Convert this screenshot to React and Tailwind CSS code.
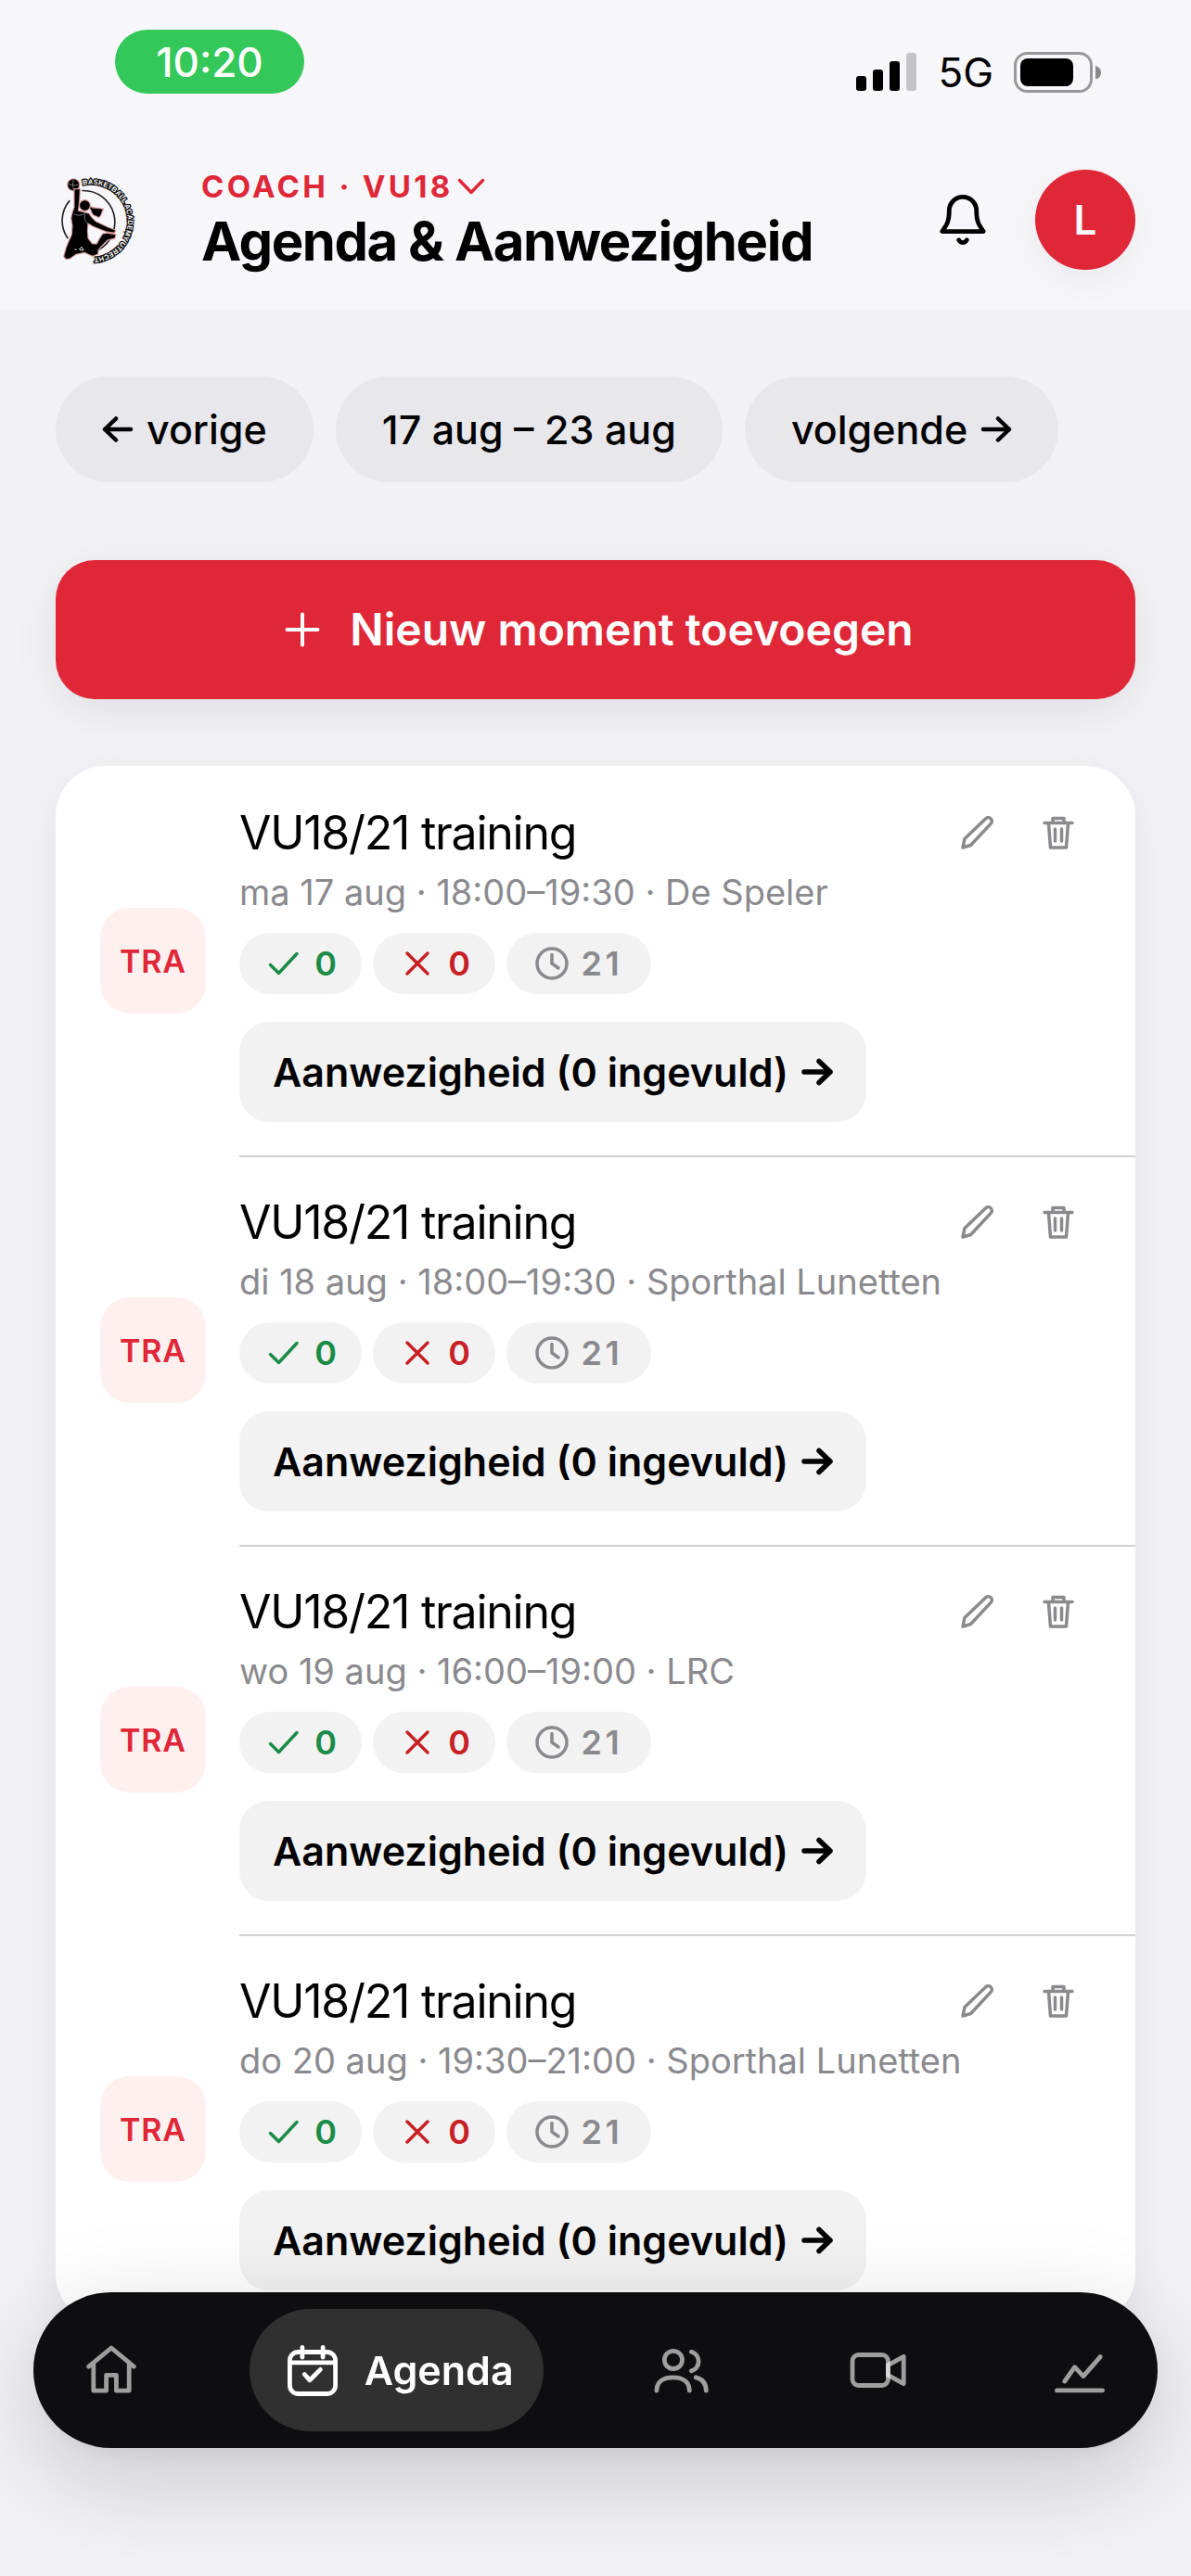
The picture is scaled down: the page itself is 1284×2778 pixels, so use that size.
import { useState } from "react";

const events = [
  { id: 1, title: "VU18/21 training", date: "ma 17 aug", time: "18:00–19:30", place: "De Speler" },
  { id: 2, title: "VU18/21 training", date: "di 18 aug", time: "18:00–19:30", place: "Sporthal Lunetten" },
  { id: 3, title: "VU18/21 training", date: "wo 19 aug", time: "16:00–19:00", place: "LRC" },
  { id: 4, title: "VU18/21 training", date: "do 20 aug", time: "19:30–21:00", place: "Sporthal Lunetten" },
];

function Icon({ children, className = "size-[72px]", width = 1.6, box = "0 0 24 24" }) {
  return (
    <svg
      viewBox={box}
      className={`${className} shrink-0`}
      fill="none"
      stroke="currentColor"
      strokeWidth={width}
      strokeLinecap="round"
      strokeLinejoin="round"
      aria-hidden="true"
    >
      {children}
    </svg>
  );
}

const tabs = [
  {
    name: "Home",
    icon: <path d="M3.9 10.7 12 4l8.1 6.7M5.6 9.6v9.8h4.6v-5.6h3.6v5.6h4.6V9.6" />,
  },
  {
    name: "Agenda",
    icon: (
      <>
        <rect x="3.8" y="5.5" width="16.4" height="15" rx="3" />
        <path d="M3.8 9.3h16.4M8.3 3.8v3.6M15.7 3.8v3.6M9.1 13.5l1.9 2.1 3.8-3.8" />
      </>
    ),
  },
  {
    name: "Team",
    icon: (
      <>
        <circle cx="9.3" cy="8.3" r="3.2" />
        <path d="M3.3 19.4c0-3 2.1-4.8 5.9-4.8s5.9 1.8 5.9 4.8M15.8 5.4a3.6 3.6 0 0 1 0 6.9M17.4 14.6c2.4.6 3.7 2.3 3.7 4.8" />
      </>
    ),
  },
  {
    name: "Video",
    icon: (
      <>
        <rect x="2" y="6.5" width="12.8" height="11" rx="2.2" />
        <path d="M14.8 10.2 20.4 7.1v9.8l-5.6-3.1z" />
      </>
    ),
  },
  {
    name: "Statistieken",
    icon: <path d="M3.8 19.3h16.4M6.6 16l3.6-5.1 3.1 3.3 6.1-7" />,
  },
];

function Logo() {
  return (
    <svg
      viewBox="51 56 249 290"
      className="h-24 w-[83px] shrink-0 overflow-visible"
      role="img"
      aria-label="Basketball Academy Utrecht"
    >
      <defs>
        <path id="logo-arc" d="M121 88A120 120 0 0 1 267 205A120 120 0 0 1 137 324.600" />
      </defs>
      <path d="M118 106a103 103 0 0 1 52 194M78 138a100 100 0 0 0-6 124" fill="none" stroke="#222" strokeWidth="5" />
      <text
        fill="#fff"
        stroke="#111"
        strokeWidth="8"
        paintOrder="stroke"
        className="font-['Liberation_Sans'] text-[23px] font-bold"
      >
        <textPath href="#logo-arc">BASKETBALL ACADEMY UTRECHT</textPath>
      </text>
      <g fill="#000" stroke="#d99a9c" strokeWidth="7" paintOrder="stroke" strokeLinejoin="round">
        <circle cx="90" cy="87" r="18" />
        <path d="M142 158c14 10 28 4 44 10-8 6-2 16-14 24-8-6-20-4-22-18z" />
        <path d="M94 102h16l-2 38-4 32 14 4 22 6 8 12 14 14 38 18 26 10-4 6-26-4-40-16-20-12-2 26 2 26 14 18 16 2 10-18 10-16 14-2 26 4-2 10-24 6-14 14-16 18-2 14-16 6-26-12-28 6-20 14-12 2-6-8 8-28 8-20 10-22 2-30-4-24 4-18 6-18z" />
        <circle cx="127" cy="154" r="16" />
      </g>
      <path d="M74 84c11 6 22 6 33 2M91 70c-5 12-4 24 1 35M92 182c12 6 24 6 36-2M128 184c-4 14 0 22 8 30" fill="none" stroke="#8d8d8d" strokeWidth="2.5" />
      <path d="M93 297l8 2M109 298l7-9 7 12z" fill="none" stroke="#ddd" strokeWidth="3" />
    </svg>
  );
}

function StatusBar() {
  return (
    <div className="flex h-[138px] items-start justify-between pt-8 pr-24 pl-[124px]">
      <div className="flex h-[69px] w-[204px] items-center justify-center rounded-full bg-[#34c759] text-[44px] font-medium text-white">
        10:20
      </div>
      <div className="flex items-center gap-[22px] pt-[22px]">
        <svg viewBox="0 0 66 42" className="h-[42px] w-[66px]" aria-hidden="true">
          <rect x="0" y="25" width="11" height="16" rx="3" />
          <rect x="18" y="18" width="11" height="23" rx="3" />
          <rect x="36" y="9" width="11" height="32" rx="3" />
          <rect x="54" y="0" width="11" height="41" rx="3" fill="#c5c5c8" />
        </svg>
        <span className="text-[44px] leading-[48px]">5G</span>
        <svg viewBox="0 0 95 44" className="h-11 w-[95px]" aria-hidden="true">
          <rect x="1.5" y="1.5" width="82" height="41" rx="13" fill="none" stroke="#98989c" strokeWidth="3" />
          <rect x="7" y="7" width="57" height="30" rx="8" />
          <path d="M88 15c4 1 6 4 6 7.500s-2 6-6 7z" fill="#8a8a8e" />
        </svg>
      </div>
    </div>
  );
}

function Arrow({ left = false, width = 4.5 }) {
  return (
    <Icon box="0 0 34 34" className="size-[34px]" width={width}>
      {left ? <path d="M31 17H3M15 5.500 3 17l12 11.500" /> : <path d="M3 17h28M19 5.500 31 17 19 28.500" />}
    </Icon>
  );
}

function EventRow({ event, first }) {
  return (
    <li className="flex gap-9 pl-12">
      <div className="flex size-[114px] shrink-0 items-center justify-center self-center rounded-[32px] bg-[#fff0f0] text-[34px] font-semibold tracking-wide text-[#df2738]">
        TRA
      </div>
      <div className={`flex-1 pb-9 ${first ? "pt-9" : "border-t-2 border-[#d1d1d3] pt-[34px]"}`}>
        <div className="flex items-center justify-between pr-10">
          <h2 className="text-[50px] leading-[72px] tracking-tight">{event.title}</h2>
          <div className="flex text-[#8a8a8e]">
            <button aria-label="Bewerken" className="flex h-[72px] w-[87px] items-center justify-center">
              <Icon box="0 0 36 36" className="size-9" width={3.5}>
                <path d="m2 34 2-9.500L26.500 3a3.700 3.700 0 0 1 5.800 5.200L10.500 31.500z" />
              </Icon>
            </button>
            <button aria-label="Verwijderen" className="flex h-[72px] w-[87px] items-center justify-center">
              <Icon box="0 0 36 36" className="size-9" width={3.5}>
                <path d="M3 7.500h30M12 7V2.500h12V7M7.500 8 9.500 34h17l2-26M14.500 14v13M21.500 14v13" />
              </Icon>
            </button>
          </div>
        </div>
        <p className="text-[38px] leading-[56px] text-[#8a8a8e]">
          {event.date} · {event.time} · {event.place}
        </p>
        <div className="mt-4 flex gap-3 text-[36px] leading-[66px] font-semibold">
          <span className="flex h-[66px] w-[132px] items-center justify-center gap-4 rounded-full bg-[#f2f2f2] pl-1 text-[#1b8c47]">
            <Icon box="0 0 34 34" className="size-[34px]" width={3.5}>
              <path d="M2.500 18.500 11.500 27.500 31 6.500" />
            </Icon>
            0
          </span>
          <span className="flex h-[66px] w-[132px] items-center justify-center gap-4 rounded-full bg-[#f2f2f2] pl-1 text-[#c82025]">
            <Icon box="0 0 34 34" className="size-[34px]" width={3.5}>
              <path d="M6 6l22 22M28 6 6 28" />
            </Icon>
            0
          </span>
          <span className="flex h-[66px] w-[156px] items-center justify-center gap-[14px] rounded-full bg-[#f2f2f2] tracking-widest text-[#8a8a8e]">
            <Icon box="0 0 36 36" className="size-9" width={3.5}>
              <circle cx="18" cy="18" r="16" />
              <path d="M18 8.500V18l7 5" />
            </Icon>
            21
          </span>
        </div>
        <button className="mt-[30px] flex h-[108px] items-center gap-[14px] rounded-[32px] bg-[#f2f2f2] px-9 text-[43px] font-semibold">
          Aanwezigheid (0 ingevuld)
          <Arrow width={5.5} />
        </button>
      </div>
    </li>
  );
}

export default function App() {
  const [activeTab, setActiveTab] = useState("Agenda");

  return (
    <div className="min-h-screen bg-[#f2f1f6] pb-60 font-[Inter,sans-serif] text-black">
      <header className="bg-[#f7f6fb]">
        <StatusBar />
        <div className="flex h-[196px] items-center pt-0.5 pr-[60px] pl-[66px]">
          <Logo />
          <div className="ml-[68px] flex-1 pt-1">
            <button className="flex items-center gap-1 text-[33px] leading-[42px] font-bold tracking-widest text-[#df2738]">
              COACH · VU18
              <Icon box="0 0 30 18" className="h-[18px] w-[30px]" width={3.5}>
                <path d="M2.500 2.500 15 15.500 27.500 2.500" />
              </Icon>
            </button>
            <h1 className="text-[58px] leading-[76px] font-bold tracking-tight">Agenda &amp; Aanwezigheid</h1>
          </div>
          <button aria-label="Meldingen" className="mr-[42px]">
            <Icon>
              <path d="M12 3.800a4.900 4.900 0 0 0-4.900 4.900c0 3.900-.8 5-2.500 7.500h14.800c-1.700-2.500-2.500-3.600-2.500-7.500A4.900 4.900 0 0 0 12 3.800zM10.600 19.300c.7 1.200 2.100 1.200 2.800 0" />
            </Icon>
          </button>
          <button className="size-[108px] rounded-full bg-[#df2738] text-[44px] font-semibold text-white shadow-[0_12px_48px_rgba(0,0,0,0.06)]">
            L
          </button>
        </div>
      </header>

      <main className="px-[60px] pt-[72px]">
        <div className="flex gap-6 text-[43px] font-medium">
          <button className="flex h-[114px] items-center gap-[14px] rounded-full bg-[#e8e7eb] px-[50px]">
            <Arrow left />
            vorige
          </button>
          <button className="h-[114px] rounded-full bg-[#e8e7eb] px-[50px]">17 aug – 23 aug</button>
          <button className="flex h-[114px] items-center gap-[14px] rounded-full bg-[#e8e7eb] px-[50px]">
            volgende
            <Arrow />
          </button>
        </div>

        <button className="mt-[84px] flex h-[150px] w-full items-center justify-center gap-8 rounded-[42px] bg-[#df2738] pl-2 text-[48px] font-semibold text-white shadow-[0_12px_48px_rgba(0,0,0,0.08)]">
          <Icon box="0 0 38 38" className="size-[38px]" width={4}>
            <path d="M19 2.500v33M2.500 19h33" />
          </Icon>
          Nieuw moment toevoegen
        </button>

        <ul className="mt-[72px] overflow-hidden rounded-[54px] bg-white shadow-[0_12px_48px_rgba(0,0,0,0.06)]">
          {events.map((event, i) => (
            <EventRow key={event.id} event={event} first={i === 0} />
          ))}
        </ul>
      </main>

      {/* Floating tab bar */}
      <nav className="fixed inset-x-9 bottom-[138px] flex h-[168px] items-center justify-between rounded-full bg-[#0e0e10] px-[18px] shadow-[0_30px_108px_rgba(0,0,0,0.18),0_6px_24px_rgba(0,0,0,0.04)]">
        {tabs.map((tab) => {
          const isActive = tab.name === activeTab;
          return (
            <a
              key={tab.name}
              href="#"
              aria-label={tab.name}
              onClick={() => setActiveTab(tab.name)}
              className={`flex h-[132px] items-center rounded-full ${
                isActive ? "gap-5 bg-[#303030] px-8 text-white" : "w-[132px] justify-center text-white/60"
              }`}
            >
              <Icon>{tab.icon}</Icon>
              {isActive && <span className="text-[43px] font-semibold">{tab.name}</span>}
            </a>
          );
        })}
      </nav>
    </div>
  );
}
